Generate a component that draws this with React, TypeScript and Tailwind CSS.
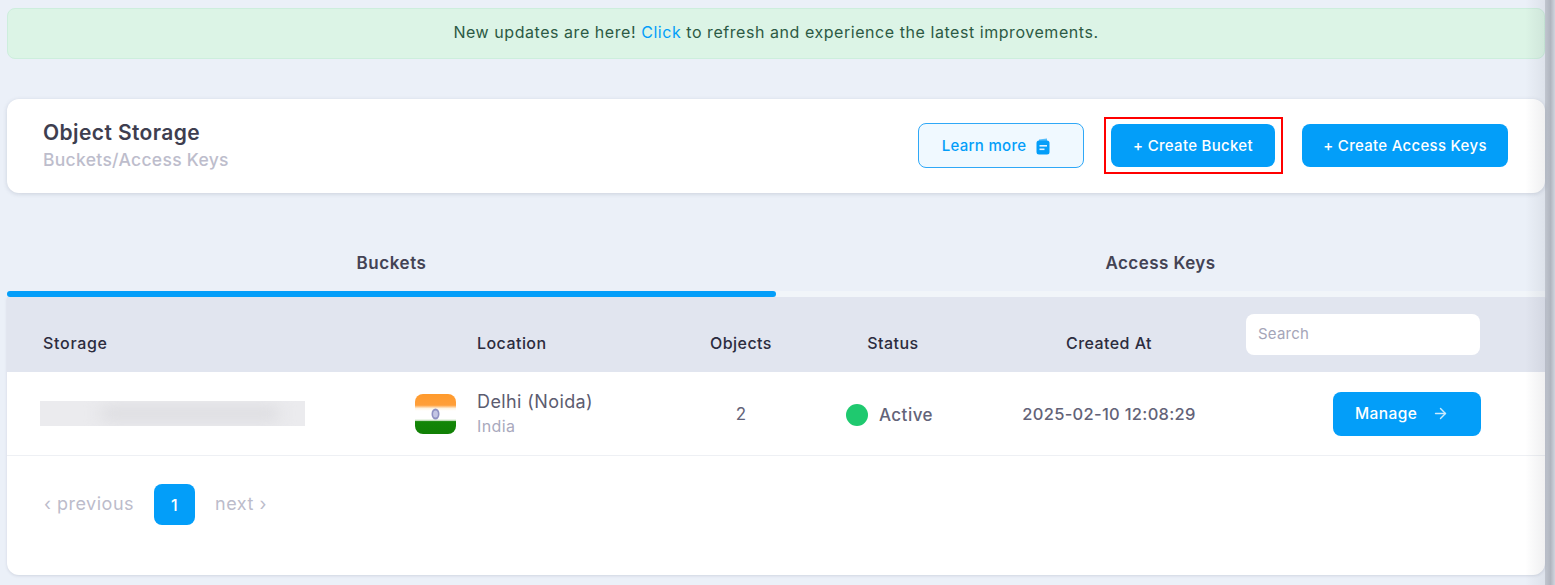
import { ArrowRight } from "lucide-react";

const font = "font-['Inter','Noto_Sans',sans-serif]";

function DocIcon() {
  return (
    <svg width="14" height="17" viewBox="0 0 14 17" fill="none">
      <path d="M3 1.5 L11 0.5 V3 H3 Z" fill="#039ef9" opacity="0.65" />
      <rect x="0.5" y="2.5" width="13" height="14" rx="2.5" fill="#039ef9" />
      <rect x="3.5" y="7" width="7.5" height="1.6" fill="#dff2ff" />
      <rect x="3.5" y="10.5" width="5" height="1.6" fill="#dff2ff" />
    </svg>
  );
}

function Flag() {
  return (
    <svg width="41" height="40" viewBox="0 0 41 40" className="shrink-0">
      <defs>
        <clipPath id="flag-clip">
          <rect width="41" height="40" rx="8" />
        </clipPath>
        <linearGradient id="flag-bands" x1="0" y1="0" x2="0" y2="1">
          <stop offset="0" stopColor="#ff9a2c" />
          <stop offset="0.28" stopColor="#ff9f3a" />
          <stop offset="0.36" stopColor="#fff3e0" />
          <stop offset="0.42" stopColor="#ffffff" />
          <stop offset="0.62" stopColor="#ffffff" />
          <stop offset="0.66" stopColor="#cfe6c9" />
          <stop offset="0.69" stopColor="#138607" />
          <stop offset="1" stopColor="#118005" />
        </linearGradient>
      </defs>
      <g clipPath="url(#flag-clip)">
        <rect width="41" height="40" fill="url(#flag-bands)" />
        <ellipse cx="20.5" cy="20" rx="4" ry="5.5" fill="#8f91c2" />
        <ellipse cx="20.5" cy="20" rx="2.4" ry="3.6" fill="#c3c5e4" />
      </g>
    </svg>
  );
}

export default function App() {
  return (
    <div className={`relative h-[585px] w-[1555px] overflow-hidden bg-[#ebf0f8] pl-[7px] pr-[10px] pt-2 ${font}`}>
      <div className="flex h-[51px] items-center justify-center rounded-lg border border-[#cdeedd] bg-[#dcf4e6] pb-[4px] text-[16px] tracking-[0.55px] text-[#2c5a44]">
        <span>
          New updates are here! <span className="text-[#039ef9]">Click</span> to refresh and experience the latest improvements.
        </span>
      </div>

      <div className="mt-10 flex h-[94px] items-center justify-between rounded-xl bg-white pb-[2px] pl-[36px] pr-[37px] shadow-[0_1px_4px_rgba(60,70,100,0.18)]">
        <div className="pt-[2px]">
          <div className="text-[21px] font-semibold leading-[28px] tracking-[0.4px] text-[#3e3e4f]">Object Storage</div>
          <div className="text-[17.5px] font-medium leading-[26px] tracking-[0.3px] text-[#bdbdcc]">Buckets/Access Keys</div>
        </div>
        <div className="flex items-center">
          <button className="flex h-[45px] w-[166px] items-center justify-center gap-[10px] rounded-lg border border-[#2fa8f7] bg-[#f0f9ff] pr-[10px] pt-[2px] text-[15px] font-medium tracking-[0.3px] text-[#039ef9]">
            Learn more
            <DocIcon />
          </button>
          <div className="ml-5 h-[57px] w-[179px] border-2 border-[#ff0000] pl-[5px] pr-[6px] pt-[5px]">
            <button className="h-[43px] w-full rounded-lg bg-[#039ef9] pt-[2px] text-[15px] font-medium tracking-[0.3px] text-white">+ Create Bucket</button>
          </div>
          <button className="ml-[19px] h-[43px] w-[206px] rounded-lg bg-[#039ef9] pt-[2px] text-[15px] font-medium tracking-[0.3px] text-white">+ Create Access Keys</button>
        </div>
      </div>

      <div className="flex h-[104px]">
        <div className="flex w-[769px] flex-col">
          <div className="flex flex-1 items-center justify-center pt-[43px] text-[17px] font-semibold tracking-[0.55px] text-[#434354]">Buckets</div>
          <div className="h-[6px] rounded-full bg-[#039ef9]" />
        </div>
        <div className="flex flex-1 flex-col">
          <div className="flex flex-1 items-center justify-center pt-[43px] text-[17px] font-semibold tracking-[0.45px] text-[#434354]">Access Keys</div>
          <div className="h-[6px] bg-[#f1f5f9]" />
        </div>
      </div>

      <div className="overflow-hidden rounded-b-xl bg-white shadow-[0_1px_3px_rgba(60,70,100,0.15)]">
        <div className="grid h-[75px] grid-cols-[390px_284px_120px_184px_248px_312px] items-center bg-[#e1e5ef] text-[16px] font-medium tracking-[0.45px] text-[#2c2c3e]">
          <div className="pl-9 pt-[17px] tracking-[0.7px]">Storage</div>
          <div className="pl-20 pt-[17px]">Location</div>
          <div className="pt-[17px] text-center">Objects</div>
          <div className="pt-[17px] text-center">Status</div>
          <div className="pt-[17px] text-center">Created At</div>
          <div className="pl-[13px]">
            <input
              placeholder="Search"
              className="h-[41px] w-[234px] rounded-lg bg-white px-3 pb-[2px] text-[15px] font-normal tracking-[0.2px] outline-none placeholder:text-[#a5a5b8]"
            />
          </div>
        </div>

        <div className="grid h-[84px] grid-cols-[390px_284px_120px_184px_248px_312px] items-center border-b border-[#eef0f4] text-[#636378]">
          <div className="pl-[33px]">
            <div className="relative h-[25px] w-[265px] overflow-hidden bg-[#ebebee]">
              <div className="absolute left-[60px] top-[6px] h-[13px] w-[180px] rounded-full bg-[#dadade] blur-sm" />
            </div>
          </div>
          <div className="flex items-center gap-[21px] pl-[18px]">
            <Flag />
            <div>
              <div className="text-[18px] leading-[24px] tracking-[0.4px] text-[#5c5c70]">Delhi (Noida)</div>
              <div className="text-[16px] leading-[24px] tracking-[0.4px] text-[#a9a9bd]">India</div>
            </div>
          </div>
          <div className="pt-[2px] text-center text-[17px]">2</div>
          <div className="flex items-center justify-center gap-[11px] pr-[7px] pt-[4px] text-[17px] font-medium tracking-[0.5px]">
            <span className="-mt-[2px] h-[22px] w-[22px] rounded-full bg-[#1fc96f]" />
            Active
          </div>
          <div className="pt-[1px] text-center text-[16.5px] font-medium tracking-[0.3px]">2025-02-10 12:08:29</div>
          <div className="pl-[100px]">
            <button className="flex h-[44px] w-[148px] items-center gap-[15px] rounded-lg bg-[#039ef9] pl-[22px] text-[15.5px] font-medium tracking-[0.4px] text-white">
              Manage
              <ArrowRight size={17} className="opacity-80" />
            </button>
          </div>
        </div>

        <div className="flex h-[119px] items-start pl-[37px] pt-[28px] text-[18px] tracking-[0.5px] text-[#bcbccb]">
          <span className="leading-[39px]">‹ previous</span>
          <span className="ml-5 flex h-[41px] w-[41px] items-center justify-center rounded-lg bg-[#039ef9] text-[16px] font-medium text-white">1</span>
          <span className="ml-5 leading-[39px]">next ›</span>
        </div>
      </div>

      <div className="pointer-events-none absolute inset-y-0 right-0 w-[30px] bg-[linear-gradient(to_right,rgba(40,45,60,0)_0%,rgba(40,45,60,0.07)_66%,rgba(40,45,60,0.22)_67%,rgba(40,45,60,0.3)_85%,rgba(40,45,60,0.14)_100%)]" />
    </div>
  );
}
